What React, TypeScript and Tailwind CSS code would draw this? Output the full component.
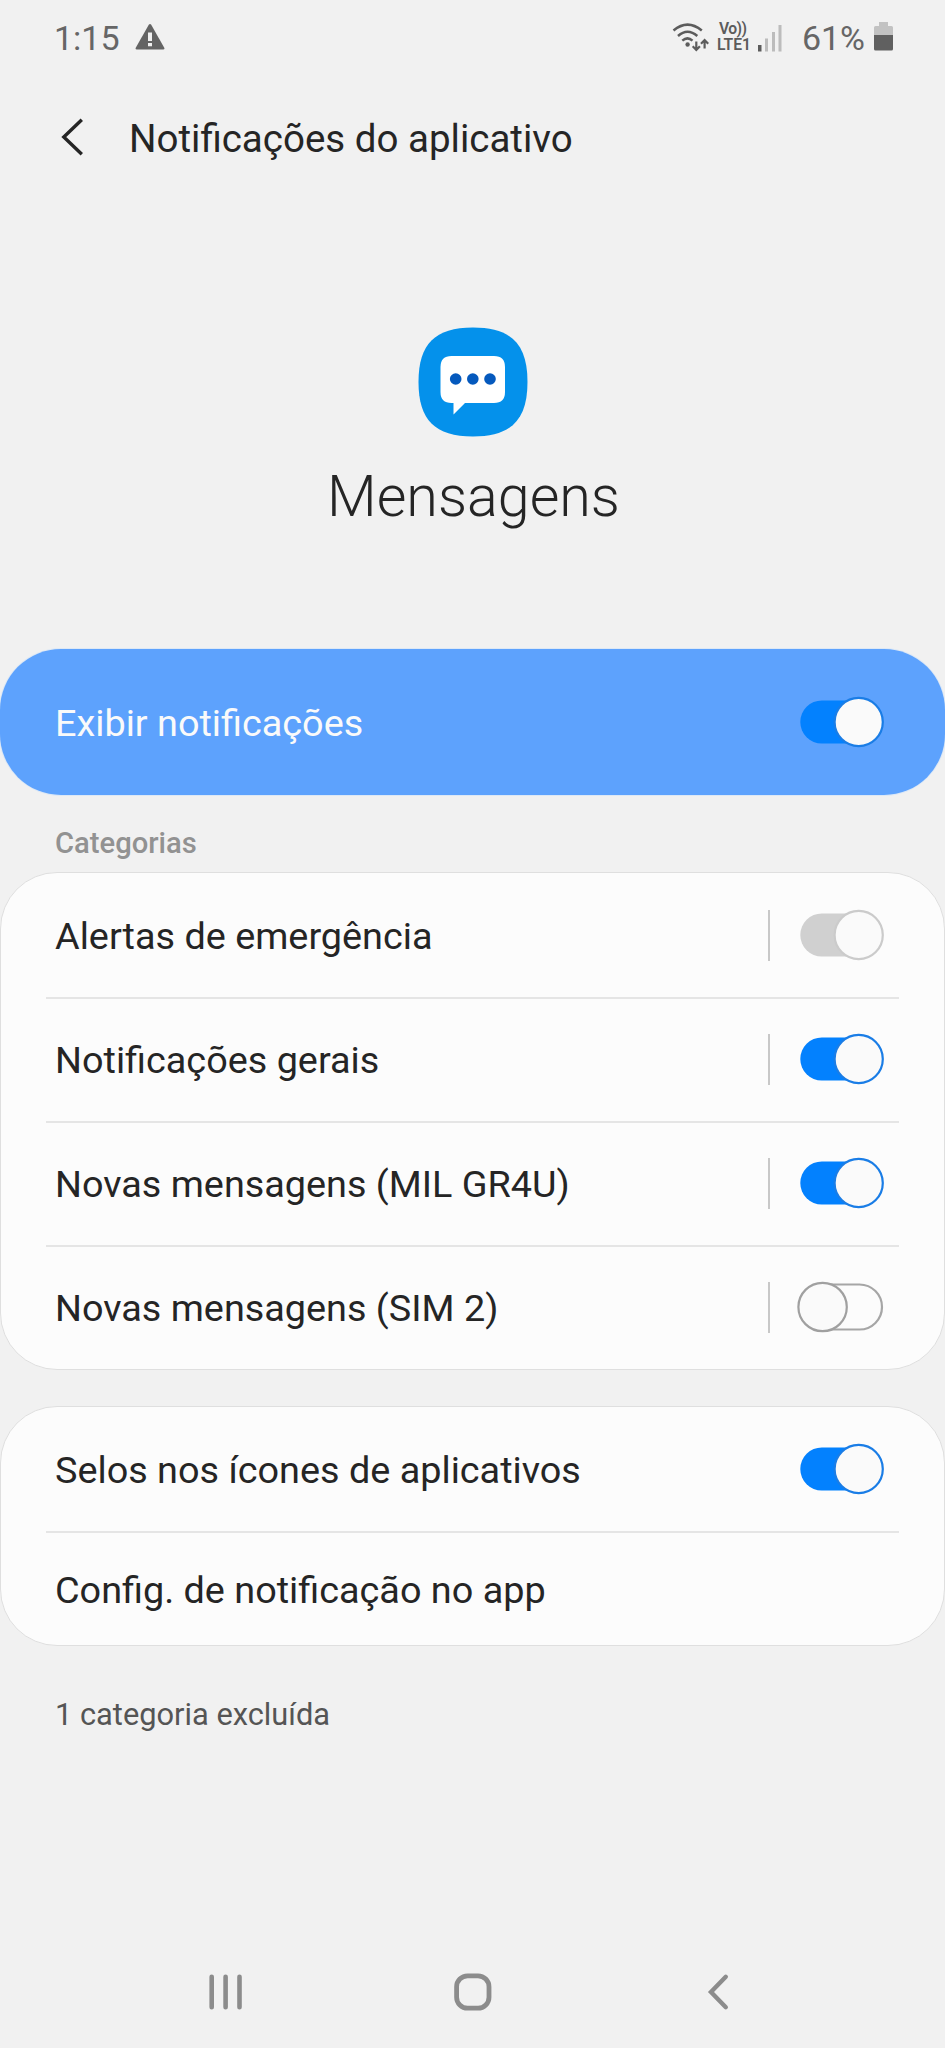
import { clsx } from "clsx";

type ToggleState = "on" | "off" | "disabled";

const CATEGORIES: { label: string; state: ToggleState }[] = [
  { label: "Alertas de emergência", state: "disabled" },
  { label: "Notificações gerais", state: "on" },
  { label: "Novas mensagens (MIL GR4U)", state: "on" },
  { label: "Novas mensagens (SIM 2)", state: "off" },
];

const ROW_HEIGHTS = ["h-[126px]", "h-[124px] pb-[2px]", "h-[124px] pb-[2px]", "h-[122px] pb-[2px]"];

function Toggle({ state }: { state: ToggleState }) {
  if (state === "off") {
    return (
      <svg width="88" height="52" viewBox="0 0 88 52" className="shrink-0">
        <rect x="4" y="3.5" width="81" height="45" rx="22.5" fill="#fcfcfc" stroke="#a6a6a6" strokeWidth="2.2" />
        <circle cx="25.6" cy="26" r="24.2" fill="#fafafa" stroke="#a0a0a0" strokeWidth="2.2" />
      </svg>
    );
  }
  const on = state === "on";
  return (
    <svg width="88" height="52" viewBox="0 0 88 52" className="shrink-0">
      <rect x="3.3" y="4.4" width="76" height="43.2" rx="21.6" fill={on ? "#0381fe" : "#d0d0d0"} />
      <circle cx="61.7" cy="26" r="24.1" fill="#fafafa" stroke={on ? "#1a7de6" : "#cbcbcb"} strokeWidth="2.2" />
    </svg>
  );
}

function StatusBar() {
  return (
    <header className="flex h-[76px] items-center pl-[54px] pr-[52px] text-[#666]">
      <span className="text-[34px] leading-none">1:15</span>
      <svg width="30" height="26" viewBox="0 0 30 26" className="mb-[3px] ml-[15px]">
        <path d="M13.8.7q1.2-1.4 2.4 0L29.4 24q.3 1.6-1.2 1.6H1.8Q.3 25.6.6 24Z" fill="#646464" />
        <path d="M13 8.5h4V17h-4ZM13 19h4v3.3h-4Z" fill="#f1f1f1" />
      </svg>
      <div className="ml-auto flex items-center">
        <svg width="37" height="29" viewBox="0 0 37 29" fill="none" stroke="#5c5c5c" strokeWidth="2.5" className="mb-[2px]">
          <path d="M1.5 7.5Q15.5-4.2 29.8 7.500M6 13Q15.500 4.500 25.300 13M10.300 17.600Q15.500 13.200 20.500 17.600" />
          <circle cx="15.6" cy="21.5" r="2.2" fill="#5c5c5c" stroke="none" />
          <path d="M24.3 18.500V27M20.700 23.200l3.600 3.700 3.600-3.700M32.600 25.500V17M29 20.800l3.600-3.700 3.600 3.700" strokeWidth="2.2" />
        </svg>
        <div className="ml-[8px] flex w-[36px] flex-col pb-[2px] text-[15.7px] font-semibold leading-[16px] text-[#5c5c5c]">
          <span className="whitespace-nowrap pl-[2px] tracking-[-0.5px]">Vo))</span>
          <span>LTE1</span>
        </div>
        <svg width="26" height="27" viewBox="0 0 26 27" className="ml-[4px]">
          <rect x="1" y="20" width="3.5" height="6.5" fill="#5c5c5c" />
          <rect x="8" y="13.5" width="3" height="13" fill="#bcbcbc" />
          <rect x="15" y="7" width="3" height="19.5" fill="#bcbcbc" />
          <rect x="21.5" y="0" width="3" height="26.5" fill="#bcbcbc" />
        </svg>
        <span className="ml-[19px] text-[34px] leading-none">61%</span>
        <svg width="19" height="29" viewBox="0 0 19 29" className="mb-[3px] ml-[9px]">
          <path d="M5 0h9v4h3.5q1.500 0 1.500 1.500V14H0V5.500Q0 4 1.500 4H5Z" fill="#c2c2c2" />
          <path d="M0 13h19v14q0 1.500-1.500 1.500h-16Q0 28.500 0 27Z" fill="#606060" />
        </svg>
      </div>
    </header>
  );
}

function AppIcon() {
  return (
    <svg width="110" height="110" viewBox="0 0 110 110">
      <path d="M55 .5C93 .5 109.5 17 109.5 55S93 109.5 55 109.5.5 93 .5 55 17 .5 55 .5Z" fill="#0491eb" />
      <path
        d="M33.5 29H76Q87 29 87 40V65Q87 76 76 76H47L35.5 87.5V76H33.5Q22.5 76 22.5 65V40Q22.5 29 33.5 29Z"
        fill="#fff"
      />
      <g fill="#0559bd">
        <circle cx="37.7" cy="52" r="5.8" />
        <circle cx="54.8" cy="52" r="5.8" />
        <circle cx="72" cy="52" r="5.8" />
      </g>
    </svg>
  );
}

function NavBar() {
  return (
    <nav className="mt-auto flex h-[112px] items-center justify-between pl-[209px] pr-[216px]">
      <svg width="34" height="38" viewBox="0 0 34 38" stroke="#8c8c8c" strokeWidth="4.6" strokeLinecap="round">
        <path d="M2.7 3.8v30.4M16.6 3.8v30.4M30.5 3.8v30.4" />
      </svg>
      <svg width="38" height="38" viewBox="0 0 38 38" fill="none" stroke="#8c8c8c" strokeWidth="4.8" className="mr-[5px]">
        <rect x="2.6" y="2.8" width="32.4" height="32.4" rx="11" />
      </svg>
      <svg width="22" height="38" viewBox="0 0 22 38" fill="none" stroke="#8c8c8c" strokeWidth="4.4" strokeLinecap="round">
        <path d="M18.8 3.8L4 19 18.8 34.2" />
      </svg>
    </nav>
  );
}

export default function App() {
  return (
    <div className="flex h-[2048px] w-[945px] flex-col overflow-hidden bg-[#f1f1f1] font-['Roboto',sans-serif] text-[#252525]">
      <StatusBar />

      <div className="flex h-[124px] items-center pl-[61px]">
        <svg width="23" height="38" viewBox="0 0 23 38" fill="none" stroke="#252525" strokeWidth="3.4" className="mb-[2px]">
          <path d="M20.8 1.8L2.8 19 20.8 36.2" />
        </svg>
        <h1 className="ml-[45px] mt-[2px] text-[38.5px] leading-none">Notificações do aplicativo</h1>
      </div>

      <section className="flex h-[449px] flex-col items-center pt-[127px]">
        <AppIcon />
        <h2 className="ml-[2px] mt-[31px] text-[57.4px] font-light leading-none">Mensagens</h2>
      </section>

      <section className="flex h-[146px] items-center justify-between rounded-[61px] bg-[#5da2fd] pl-[55px] pr-[60px] shadow-[0_0_0_1px_#dce8f6]">
        <span className="mt-[4px] text-[37.8px] leading-none text-[#fafafa]">Exibir notificações</span>
        <Toggle state="on" />
      </section>

      <h3 className="flex h-[77px] items-center pl-[55px] pt-[20px] text-[29.2px] font-medium leading-none text-[#929292]">
        Categorias
      </h3>

      <ul className="rounded-[57px] border border-[#dfdfdf] bg-[#fcfcfc] px-[45px]">
        {CATEGORIES.map(({ label, state }, i) => (
          <li
            key={label}
            className={clsx(
              "flex items-center pl-[9px] pr-[14px]",
              ROW_HEIGHTS[i],
              i < CATEGORIES.length - 1 && "border-b-2 border-[#e5e5e5]",
            )}
          >
            <span className="mt-[4px] text-[37.8px] leading-none">{label}</span>
            <span className="ml-auto mr-[27px] h-[51px] w-[2px] bg-[#c8c8c8]" />
            <Toggle state={state} />
          </li>
        ))}
      </ul>

      <ul className="mt-[36px] rounded-[57px] border border-[#dfdfdf] bg-[#fcfcfc] px-[45px]">
        <li className="flex h-[126px] items-center justify-between border-b-2 border-[#e5e5e5] pl-[9px] pr-[14px]">
          <span className="mt-[3px] text-[37.8px] leading-none">Selos nos ícones de aplicativos</span>
          <Toggle state="on" />
        </li>
        <li className="flex h-[112px] items-center pl-[9px]">
          <span className="mt-[4px] text-[37.8px] leading-none">Config. de notificação no app</span>
        </li>
      </ul>

      <p className="mt-[54px] pl-[55px] text-[30.8px] leading-none text-[#555]">1 categoria excluída</p>

      <NavBar />
    </div>
  );
}
